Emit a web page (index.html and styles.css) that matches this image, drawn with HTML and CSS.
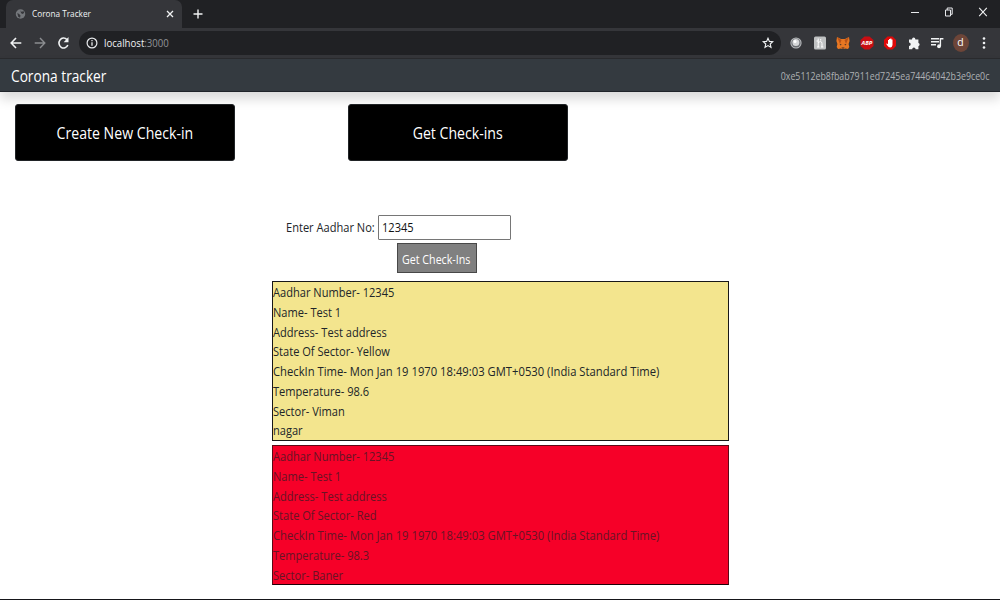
FILE: index.html
```html
<!DOCTYPE html>
<html lang="en">
<head>
<meta charset="utf-8">
<title>Corona Tracker</title>
<link rel="stylesheet" href="styles.css">
</head>
<body>
<div class="window">
  <div class="tabstrip">
    <div class="tab">
      <svg class="favicon" viewBox="0 0 12 12"><circle cx="6" cy="6" r="5.200" fill="#74777b"/><path d="M2.500 5l2 1 1.500 1.500-.5 2.500-2-1zM6 2l1 1.500 2.500-.5.5 2-2 1-1.500-1z" fill="#35363a"/></svg>
      <span class="fit tab-title">Corona Tracker</span>
      <svg class="tab-close" viewBox="0 0 8 8"><path d="M1 1l6 6M7 1L1 7" stroke="#f1f3f4" stroke-width="1.3"/></svg>
    </div>
    <svg class="new-tab" viewBox="0 0 10 10"><path d="M5 .5v9M.5 5h9" stroke="#f1f3f4" stroke-width="1.4"/></svg>
    <div class="controls">
      <svg viewBox="0 0 10 10"><path d="M1 5.5h8" stroke="#e8eaed"/></svg>
      <svg viewBox="0 0 10 10" fill="none" stroke="#e8eaed"><path d="M1.5 3h5v6h-5zM3.2 3V1h5v6.3H6.6"/></svg>
      <svg viewBox="0 0 10 10"><path d="M1.2 .8l7.6 8.4M8.8 .8L1.2 9.2" stroke="#f1f3f4" stroke-width="1.1"/></svg>
    </div>
  </div>
  <div class="toolbar">
    <div class="nav-icons">
      <svg viewBox="0 0 14 14" fill="none" stroke="#f1f3f4" stroke-width="1.6"><path d="M12.3 7H2.5M7 2L2.2 7 7 12"/></svg>
      <svg viewBox="0 0 14 14" fill="none" stroke="#8b8d90" stroke-width="1.4"><path d="M1.7 7h9.8M7 2l4.8 5L7 12"/></svg>
      <svg viewBox="0 0 14 14"><path d="M10.800 9A4.600 5 0 1 1 9.900 3.600" fill="none" stroke="#f1f3f4" stroke-width="1.6"/><path d="M11.500 1v5.200H6.700z" fill="#f1f3f4"/></svg>
    </div>
    <div class="omnibox">
      <svg class="info" viewBox="0 0 12 12"><circle cx="6" cy="6" r="4.9" fill="none" stroke="#e8eaed" stroke-width="1.2"/><path d="M6 5.3v3.4M6 3v1.2" stroke="#e8eaed" stroke-width="1.3"/></svg>
      <span class="fit url">localhost<span class="port">:3000</span></span>
      <svg class="star" viewBox="0 0 12 12"><path d="M6 1.2l1.4 3.2 3.4.3-2.6 2.3.8 3.4L6 8.6l-3 1.8.8-3.4L1.2 4.7l3.4-.3z" fill="none" stroke="#f1f3f4" stroke-width="1.1"/></svg>
    </div>
    <div class="extensions">
      <svg viewBox="0 0 14 14"><circle cx="7" cy="7" r="5.600" fill="#b9bbbe"/><circle cx="7" cy="7" r="4.600" fill="#6a6d72"/><circle cx="6.900" cy="6.600" r="3.500" fill="#d6d7d9"/><circle cx="6" cy="5.500" r="1.500" fill="#fff"/></svg>
      <svg viewBox="0 0 14 14"><rect x="1" y=".5" width="12" height="13" rx="1.5" fill="#bfc1c2"/><path d="M5.200 2.500v8.500M5.200 7q1-1.500 2.300-1.400 1.500.1 1.500 2v3.400M7.700 3v1.500M4 11h2.400M8 11h2.400M3.500 5h1.700" fill="none" stroke="#fff" stroke-width="1"/></svg>
      <svg viewBox="0 0 14 14"><path d="M1 1l4 2h4l4-2 .6 4-1 3 .7 3-1.3 2-3-.6L8.200 13H5.800L5 12.400 2 13 .7 11l.7-3-1-3z" fill="#e87722"/><path d="M1 1l4.500 3L4 8zM13 1L8.500 4 10 8z" fill="#b95318"/><path d="M3.500 8l2 .3-.6 1.200zM10.500 8l-2 .3.6 1.200zM5.500 11.500h3l-.5 1H6z" fill="#3b2d28"/></svg>
      <svg viewBox="0 0 14 14"><path d="M4.500 .5h5l4 3.500v6l-4 3.500h-5L.5 10V4z" fill="#c90d12"/><text class="abp" x="7" y="9.200" text-anchor="middle">ABP</text></svg>
      <svg viewBox="0 0 14 14"><path d="M4.500 .5h5l3.500 3.500v6l-3.500 3.500h-5L1 10V4z" fill="#df0909"/><path d="M3.500 7.300l1.500.9V3.900h1V2.900h1.200v-.4h1.200v.9h1.100V9q-.4 2.500-2.300 2.500Q5.500 11.500 3.500 8.500z" fill="#fff"/></svg>
      <svg viewBox="0 0 14 14"><path d="M2 3.500h3a1.700 1.900 0 0 1 3.400 0h3v3.400a1.600 1.700 0 0 1 0 3.300v3H8.600a1.700 1.700 0 0 0-3.400 0H2v-3.200a1.700 1.700 0 0 0 0-3.400z" fill="#f1f3f4"/></svg>
      <svg viewBox="0 0 14 14"><path d="M1 2.700h8M1 5.700h8M1 8.700h5M10.400 10V2.700h3" fill="none" stroke="#f1f3f4" stroke-width="1.400"/><ellipse cx="9" cy="10.300" rx="1.900" ry="2" fill="#f1f3f4"/></svg>
      <span class="avatar">d</span>
      <svg viewBox="0 0 14 14" fill="#f1f3f4"><circle cx="7" cy="2.500" r="1.300"/><circle cx="7" cy="7" r="1.300"/><circle cx="7" cy="11.500" r="1.300"/></svg>
    </div>
  </div>
  <header class="navbar">
    <span class="fit brand">Corona tracker</span>
    <span class="fit account">0xe5112eb8fbab7911ed7245ea74464042b3e9ce0c</span>
  </header>
  <main>
    <div class="actions">
      <button class="action"><span class="fit create">Create New Check-in</span></button>
      <button class="action"><span class="fit get">Get Check-ins</span></button>
    </div>
    <div class="lookup">
      <label class="field"><span class="fit field-label">Enter Aadhar No:</span><span class="input"><span class="fit value">12345</span></span></label>
      <button class="submit"><span class="fit submit-text">Get Check-Ins</span></button>
    </div>
    <section class="results">
      <div class="card yellow">
        <div class="fit">Aadhar Number- 12345</div>
        <div class="fit">Name- Test 1</div>
        <div class="fit">Address- Test address</div>
        <div class="fit">State Of Sector- Yellow</div>
        <div class="fit time">CheckIn Time- Mon Jan 19 1970 18:49:03 GMT+0530 (India Standard Time)</div>
        <div class="fit">Temperature- 98.6</div>
        <div class="fit">Sector- Viman</div>
        <div class="fit">nagar</div>
      </div>
      <div class="card red">
        <div class="fit">Aadhar Number- 12345</div>
        <div class="fit">Name- Test 1</div>
        <div class="fit">Address- Test address</div>
        <div class="fit">State Of Sector- Red</div>
        <div class="fit time">CheckIn Time- Mon Jan 19 1970 18:49:03 GMT+0530 (India Standard Time)</div>
        <div class="fit">Temperature- 98.3</div>
        <div class="fit">Sector- Baner</div>
      </div>
    </section>
  </main>
</div>
</body>
</html>
```
FILE: styles.css
```css
* { box-sizing: border-box; }
body { margin: 0; background: #fff; color: #212529; font-family: "Open Sans", "Noto Sans", sans-serif; font-size: 13.2px; }
button { margin: 0; padding: 0; font: inherit; }
svg { display: block; flex: none; }
.window { width: 1000px; height: 600px; overflow: hidden; display: flex; flex-direction: column; border-bottom: 1px solid #16161a; }
/* narrow text setting */
.fit { display: block; flex: none; white-space: nowrap; transform: scaleX(.84); transform-origin: left center; }
.tabstrip { flex: none; height: 28px; background: #202124; display: flex; align-items: center; }
.tab { width: 176px; height: 28px; margin-left: 6px; padding: 0 8px 0 9px; background: #35363a; border-radius: 7px 7px 0 0; display: flex; align-items: center; }
.favicon { width: 11px; height: 12px; margin-right: 6px; }
.tab-title { font-size: 9.8px; color: #f1f3f4; width: 130px; padding-bottom: 1px; }
.tab-close { width: 8px; height: 8px; margin-left: 4px; }
.new-tab { width: 10px; height: 10px; margin-left: 11px; }
.controls { display: flex; gap: 24px; margin-left: auto; padding-right: 12px; padding-bottom: 4px; }
.controls svg { width: 10px; height: 10px; }
.toolbar { flex: none; height: 31px; background: #35363a; border-bottom: 1px solid #2a2b2e; display: flex; align-items: center; padding-left: 9px; }
.nav-icons { display: flex; gap: 10px; width: 70px; }
.nav-icons svg { width: 14px; height: 14px; }
.omnibox { width: 702px; height: 24px; border-radius: 12px; background: #202124; display: flex; align-items: center; padding: 0 7px; }
.info { width: 12px; height: 12px; margin-right: 6px; }
.url { font-size: 11px; color: #f1f3f4; padding-bottom: 2px; transform: scaleX(.875); }
.port { color: #909397; }
.star { width: 12px; height: 12px; margin-left: auto; }
.extensions { display: flex; align-items: center; gap: 9.5px; margin-left: 8px; }
.extensions svg { width: 14px; height: 14px; }
.abp { font: italic bold 5.8px "Open Sans", sans-serif; fill: #fff; }
.avatar { width: 16px; height: 18px; margin: 0 -1px; border-radius: 50%; background: #6d4538; color: #fff; font-size: 10.5px; line-height: 17px; text-align: center; }
.navbar { flex: none; height: 33px; background: #343a40; border-bottom: 1px solid #20242a; box-shadow: 0 7px 12px rgba(0,0,0,.15); display: flex; align-items: center; justify-content: space-between; padding: 0 11px; }
.brand { font-size: 16.5px; color: #fff; transform: scaleX(.83); }
.account { font-size: 10.8px; color: #adb0b3; transform: scaleX(.817); transform-origin: right center; }
main { flex: 1; }
.actions { display: flex; gap: 113px; padding: 12px 0 0 14.5px; }
.action { width: 220px; height: 57px; background: #000; color: #fff; border: 1px solid #202326; border-radius: 3px; font-size: 16.5px; display: flex; justify-content: center; align-items: center; }
.action .fit { transform: scaleX(.855); transform-origin: center; }
.lookup { display: flex; flex-direction: column; width: 225px; margin: 54px 0 0 286px; }
.field { display: flex; align-items: center; justify-content: space-between; }
.field-label { width: 91px; padding-bottom: 1px; }
.input { display: flex; align-items: center; width: 133.5px; height: 25px; border: 1px solid #767676; border-radius: 1px; padding: 0 0 1px 3px; color: #111; }
.submit { width: 80.5px; height: 30px; margin: 3px 0 0 110.5px; background: #808080; border: 1px solid #484848; color: #fff; display: flex; align-items: center; justify-content: flex-start; padding: 1px 0 0 4px; }
.submit .fit { transform: scaleX(.81); }
.results { display: flex; flex-direction: column; gap: 4px; width: 457px; margin: 8px 0 0 272px; }
.card { border: 1px solid #181818; line-height: 19.75px; }
.card .fit { position: relative; top: 1px; }
.card .time { transform: scaleX(.853); }
.yellow { background: #f3e58e; }
.red { background: #f60028; border-color: #5c0815; border-bottom-color: #210006; color: #681425; }
```
